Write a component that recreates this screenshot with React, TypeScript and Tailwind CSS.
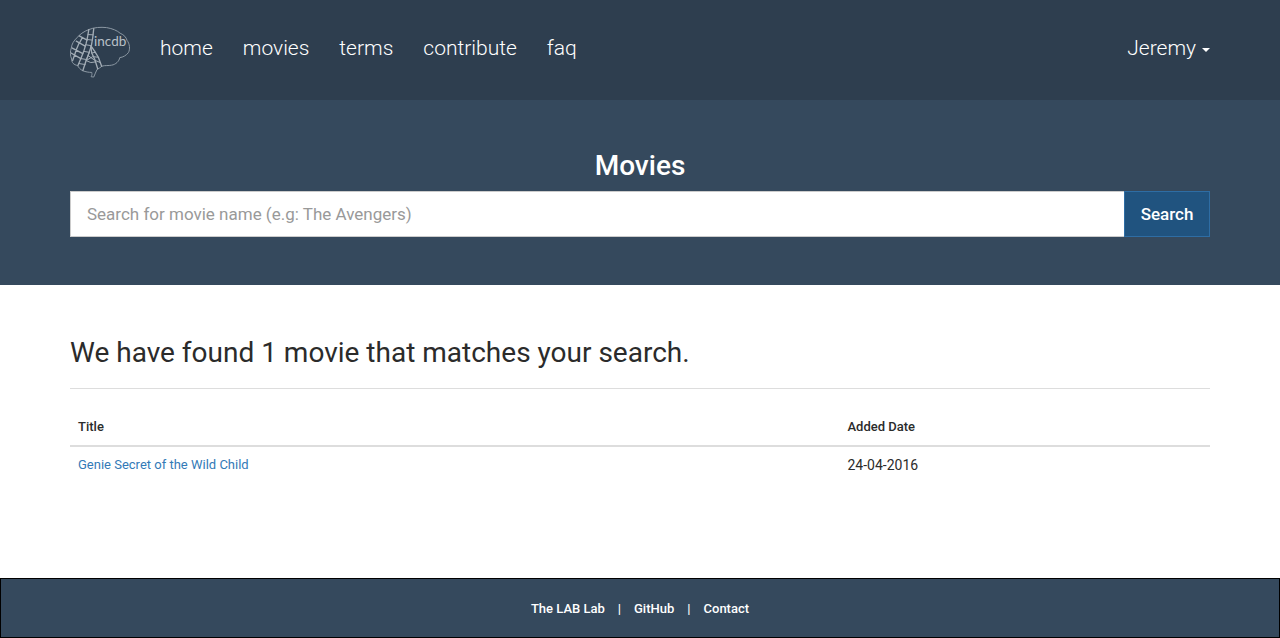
import React from "react";

const navItems = ["home", "movies", "terms", "contribute", "faq"];
const movies = [{ title: "Genie Secret of the Wild Child", added: "24-04-2016" }];
const footerLinks = ["The LAB Lab", "GitHub", "Contact"];

function Logo() {
  return (
    <svg
      viewBox="29 18 182 156"
      className="h-[52px] w-[60px]"
      fill="none"
      stroke="#a3adb6"
      strokeWidth="3"
      strokeLinejoin="round"
      strokeLinecap="round"
      role="img"
      aria-label="incdb"
    >
      <path
        stroke="#8d99a4"
        d="M86 28 C102 21 122 20 140 22 C158 25 172 31 181 39 C193 44 200 52 202 61 C210 70 212 88 206 98 C200 106 190 112 180 113 C178 124 168 134 155 136 C146 138 135 136 126 139 C120 143 116 147 111 149 C107 156 105 164 101 172 L93 171 C96 166 96 162 95 158 C86 158 76 156 68 153 C60 149 55 143 52 137 C41 135 33 128 34 117 C29 107 29 94 33 84 C34 72 41 61 50 53 C58 43 70 34 86 28 Z"
      />
      <path d="M86 28 L82 52 L78 70 L71 93 L62 116 L53 137" strokeWidth="4" />
      <path d="M101 25 L98 52 L94 76 L87 98 L78 122 L68 152" strokeWidth="4" />
      <path d="M84 43 L99 44 M81 58 L97 60 M77 74 L94 77 M70 94 L88 97 M62 116 L80 119 M56 131 L75 134" />
      <path d="M57 47 L81 60 M48 63 L75 78 M36 84 L68 101 M32 99 L62 116 M66 53 L58 68 M57 68 L48 89 L43 105 L37 122" strokeWidth="4" />
      <path d="M93 78 L104 94 L115 112 L125 139 M92 78 L95 99 L104 118 L113 147" strokeWidth="4" />
      <path d="M95 99 L106 97 M87 98 L78 122 L98 110 L115 112 M84 107 L104 121 L121 128 M78 122 L92 128 L107 126" />
    
      <text
        x="102"
        y="79"
        fill="#b8c0c7"
        stroke="none"
        fontFamily="Lato, sans-serif"
        fontSize="41"
        fontWeight="400"
      >
        incdb
      </text>
    </svg>
  );
}

export default function App() {
  return (
    <div className="flex min-h-screen flex-col bg-white font-['Roboto',sans-serif] text-[13px] leading-5 text-[#2b2b2b]">
      <header className="bg-[#2e3e4f]">
        <div className="mx-auto flex h-[100px] w-full max-w-[1170px] items-center justify-between px-[15px] pb-1">
          <nav aria-label="Main" className="flex items-center gap-[30px] text-[21px] font-light leading-8 text-white">
            <a href="#home" className="pt-2">
              <Logo />
            </a>
            {navItems.map((item) => (
              <a key={item} href={`#${item}`}>
                {item}
              </a>
            ))}
          </nav>
          <button type="button" className="flex items-center gap-1.5 text-[21px] font-light leading-8 text-white">
            Jeremy
            <svg viewBox="0 0 8 4" className="mt-1 h-1 w-2" fill="currentColor" aria-hidden="true">
              <path d="M0 0h8L4 4z" />
            </svg>
          </button>
        </div>
      </header>

      <section className="bg-[#35495d]">
        <div className="mx-auto w-full max-w-[1170px] px-[15px] pt-12 pb-12">
          <h1 className="mb-2 text-center text-[28px] font-medium leading-[35px] text-white">Movies</h1>
          <form className="flex h-[46px]" onSubmit={(e) => e.preventDefault()}>
            <input
              type="text"
              aria-label="Movie name"
              placeholder="Search for movie name (e.g: The Avengers)"
              className="min-w-0 flex-1 border border-r-0 border-[#cccccc] bg-white px-4 text-[17px] text-[#555555] outline-none placeholder:text-[#999999] placeholder:opacity-100"
            />
            <button
              type="submit"
              className="w-[86px] border border-[#2e6da4] bg-[#20537f] text-[17px] font-medium text-white"
            >
              Search
            </button>
          </form>
        </div>
      </section>

      <main className="mx-auto w-full max-w-[1170px] flex-1 px-[15px] pt-12">
        <h2 className="border-b border-[#dddddd] pt-0.5 pb-[17px] text-[28px] leading-9">
          We have found 1 movie that matches your search.
        </h2>
        <table className="mt-5 w-full table-fixed text-left">
          <thead>
            <tr className="border-b-2 border-[#dddddd]">
              <th scope="col" className="w-[67.5%] p-2 font-medium">
                Title
              </th>
              <th scope="col" className="p-2 font-medium">
                Added Date
              </th>
            </tr>
          </thead>
          <tbody>
            {movies.map((movie) => (
              <tr key={movie.title}>
                <td className="p-2">
                  <a href="#movie" className="text-[#337ab7]">
                    {movie.title}
                  </a>
                </td>
                <td className="p-2 text-sm">{movie.added}</td>
              </tr>
            ))}
          </tbody>
        </table>
      </main>

      <footer className="border border-black bg-[#35495d] pt-5 pb-[18px] text-white">
        <ul className="flex h-5 items-center justify-center font-medium">
          {footerLinks.map((link, i) => (
            <li key={link} className="flex items-center">
              {i > 0 && <span className="px-[13px]">|</span>}
              <a href="#footer">{link}</a>
            </li>
          ))}
        </ul>
      </footer>
    </div>
  );
}
